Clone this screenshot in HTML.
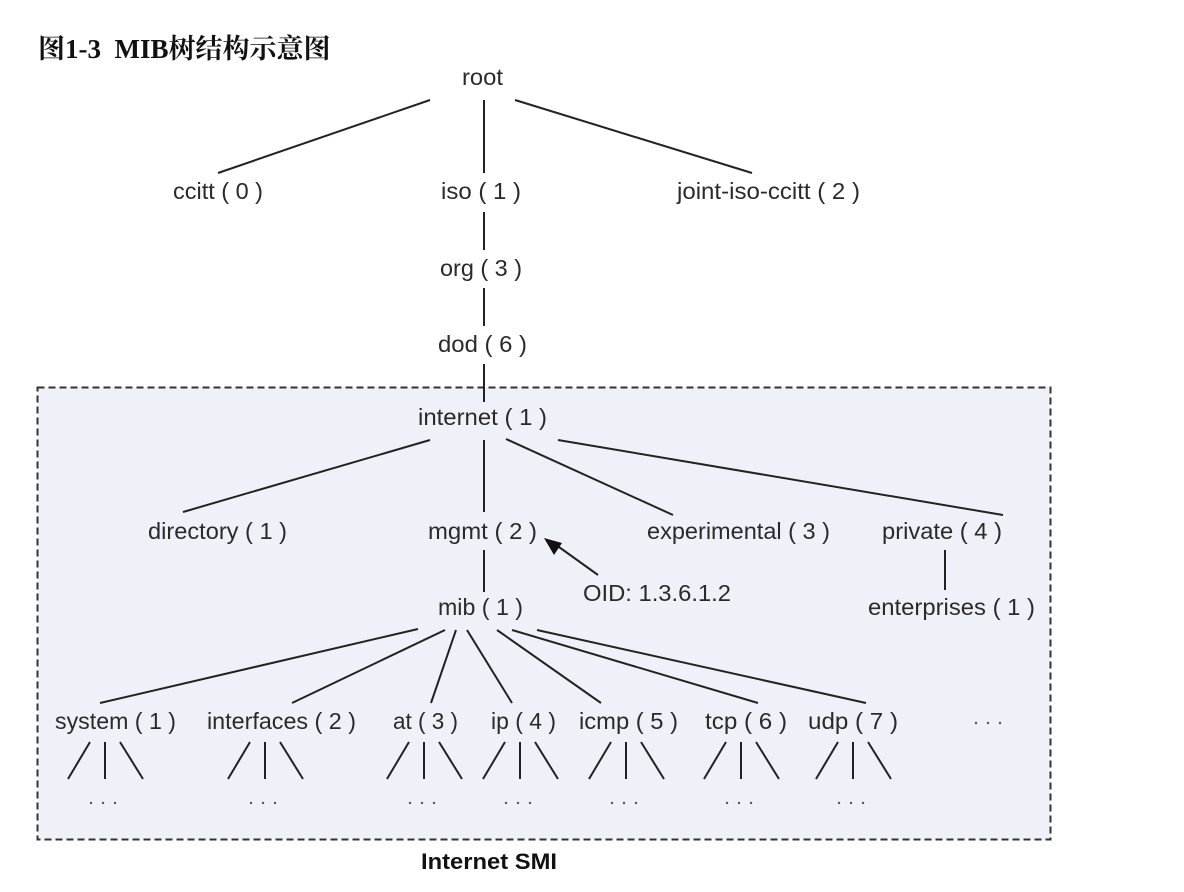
<!DOCTYPE html>
<html><head><meta charset="utf-8"><style>
html,body{margin:0;padding:0;background:#fff;width:1184px;height:892px;overflow:hidden}
.t{position:absolute;left:38px;top:27px;font-family:"Liberation Serif","Noto Serif CJK SC",serif;font-weight:bold;font-size:27px;color:#111}
svg{position:absolute;left:0;top:0}
svg text{font-family:"Liberation Sans",sans-serif;font-size:23px;fill:#2a2a2a}
</style></head><body>
<div class="t">图1-3&nbsp; MIB树结构示意图</div>
<svg width="1184" height="892" viewBox="0 0 1184 892">
<rect x="37.5" y="387.5" width="1013" height="452" fill="#eef2f8" stroke="#333" stroke-width="2" stroke-dasharray="7,4"/>
<g stroke="#222" stroke-width="2" fill="none">
<line x1="430" y1="100" x2="218" y2="173"/>
<line x1="484" y1="100" x2="484" y2="173"/>
<line x1="515" y1="100" x2="752" y2="173"/>
<line x1="484" y1="212" x2="484" y2="250"/>
<line x1="484" y1="288" x2="484" y2="326"/>
<line x1="484" y1="364" x2="484" y2="402"/>
<line x1="430" y1="440" x2="183" y2="512"/>
<line x1="484" y1="440" x2="484" y2="512"/>
<line x1="506" y1="439" x2="673" y2="515"/>
<line x1="558" y1="440" x2="1003" y2="515"/>
<line x1="484" y1="550" x2="484" y2="592"/>
<line x1="945" y1="550" x2="945" y2="590"/>
<line x1="598" y1="575" x2="552" y2="542"/>
<line x1="418" y1="629" x2="100" y2="703"/>
<line x1="445" y1="630" x2="292" y2="703"/>
<line x1="456" y1="630" x2="431" y2="703"/>
<line x1="467" y1="630" x2="512" y2="703"/>
<line x1="497" y1="630" x2="601" y2="703"/>
<line x1="512" y1="630" x2="758" y2="703"/>
<line x1="537" y1="630" x2="866" y2="703"/>
</g>
<polygon points="544,538 562,543 554,555" fill="#111"/>
<g stroke="#222" stroke-width="2">
<line x1="90" y1="742" x2="68" y2="779"/><line x1="105" y1="742" x2="105" y2="779"/><line x1="120" y1="742" x2="143" y2="779"/>
<line x1="250" y1="742" x2="228" y2="779"/><line x1="265" y1="742" x2="265" y2="779"/><line x1="280" y1="742" x2="303" y2="779"/>
<line x1="409" y1="742" x2="387" y2="779"/><line x1="424" y1="742" x2="424" y2="779"/><line x1="439" y1="742" x2="462" y2="779"/>
<line x1="505" y1="742" x2="483" y2="779"/><line x1="520" y1="742" x2="520" y2="779"/><line x1="535" y1="742" x2="558" y2="779"/>
<line x1="611" y1="742" x2="589" y2="779"/><line x1="626" y1="742" x2="626" y2="779"/><line x1="641" y1="742" x2="664" y2="779"/>
<line x1="726" y1="742" x2="704" y2="779"/><line x1="741" y1="742" x2="741" y2="779"/><line x1="756" y1="742" x2="779" y2="779"/>
<line x1="838" y1="742" x2="816" y2="779"/><line x1="853" y1="742" x2="853" y2="779"/><line x1="868" y1="742" x2="891" y2="779"/>
</g>
<g fill="#555">
<circle cx="91" cy="803" r="1.2"/><circle cx="103" cy="803" r="1.2"/><circle cx="115" cy="803" r="1.2"/>
<circle cx="251" cy="803" r="1.2"/><circle cx="263" cy="803" r="1.2"/><circle cx="275" cy="803" r="1.2"/>
<circle cx="410" cy="803" r="1.2"/><circle cx="422" cy="803" r="1.2"/><circle cx="434" cy="803" r="1.2"/>
<circle cx="506" cy="803" r="1.2"/><circle cx="518" cy="803" r="1.2"/><circle cx="530" cy="803" r="1.2"/>
<circle cx="612" cy="803" r="1.2"/><circle cx="624" cy="803" r="1.2"/><circle cx="636" cy="803" r="1.2"/>
<circle cx="727" cy="803" r="1.2"/><circle cx="739" cy="803" r="1.2"/><circle cx="751" cy="803" r="1.2"/>
<circle cx="839" cy="803" r="1.2"/><circle cx="851" cy="803" r="1.2"/><circle cx="863" cy="803" r="1.2"/>
<circle cx="976" cy="723" r="1.2"/><circle cx="988" cy="723" r="1.2"/><circle cx="1000" cy="723" r="1.2"/>
</g>
<g>
<text x="462" y="85" textLength="41" lengthAdjust="spacingAndGlyphs">root</text>
<text x="173" y="199" textLength="90" lengthAdjust="spacingAndGlyphs">ccitt ( 0 )</text>
<text x="441" y="199" textLength="80" lengthAdjust="spacingAndGlyphs">iso ( 1 )</text>
<text x="677" y="199" textLength="183" lengthAdjust="spacingAndGlyphs">joint-iso-ccitt ( 2 )</text>
<text x="440" y="276" textLength="82" lengthAdjust="spacingAndGlyphs">org ( 3 )</text>
<text x="438" y="352" textLength="89" lengthAdjust="spacingAndGlyphs">dod ( 6 )</text>
<text x="418" y="425" textLength="129" lengthAdjust="spacingAndGlyphs">internet ( 1 )</text>
<text x="148" y="539" textLength="139" lengthAdjust="spacingAndGlyphs">directory ( 1 )</text>
<text x="428" y="539" textLength="109" lengthAdjust="spacingAndGlyphs">mgmt ( 2 )</text>
<text x="647" y="539" textLength="183" lengthAdjust="spacingAndGlyphs">experimental ( 3 )</text>
<text x="882" y="539" textLength="120" lengthAdjust="spacingAndGlyphs">private ( 4 )</text>
<text x="583" y="601" textLength="148" lengthAdjust="spacingAndGlyphs">OID: 1.3.6.1.2</text>
<text x="438" y="615" textLength="85" lengthAdjust="spacingAndGlyphs">mib ( 1 )</text>
<text x="868" y="615" textLength="167" lengthAdjust="spacingAndGlyphs">enterprises ( 1 )</text>
<text x="55" y="729" textLength="121" lengthAdjust="spacingAndGlyphs">system ( 1 )</text>
<text x="207" y="729" textLength="149" lengthAdjust="spacingAndGlyphs">interfaces ( 2 )</text>
<text x="393" y="729" textLength="65" lengthAdjust="spacingAndGlyphs">at ( 3 )</text>
<text x="491" y="729" textLength="65" lengthAdjust="spacingAndGlyphs">ip ( 4 )</text>
<text x="579" y="729" textLength="99" lengthAdjust="spacingAndGlyphs">icmp ( 5 )</text>
<text x="705" y="729" textLength="82" lengthAdjust="spacingAndGlyphs">tcp ( 6 )</text>
<text x="808" y="729" textLength="90" lengthAdjust="spacingAndGlyphs">udp ( 7 )</text>
<text x="421" y="869" textLength="136" lengthAdjust="spacingAndGlyphs" style="font-weight:bold;fill:#111;font-size:22px">Internet SMI</text>
</g>
</svg>
</body></html>
